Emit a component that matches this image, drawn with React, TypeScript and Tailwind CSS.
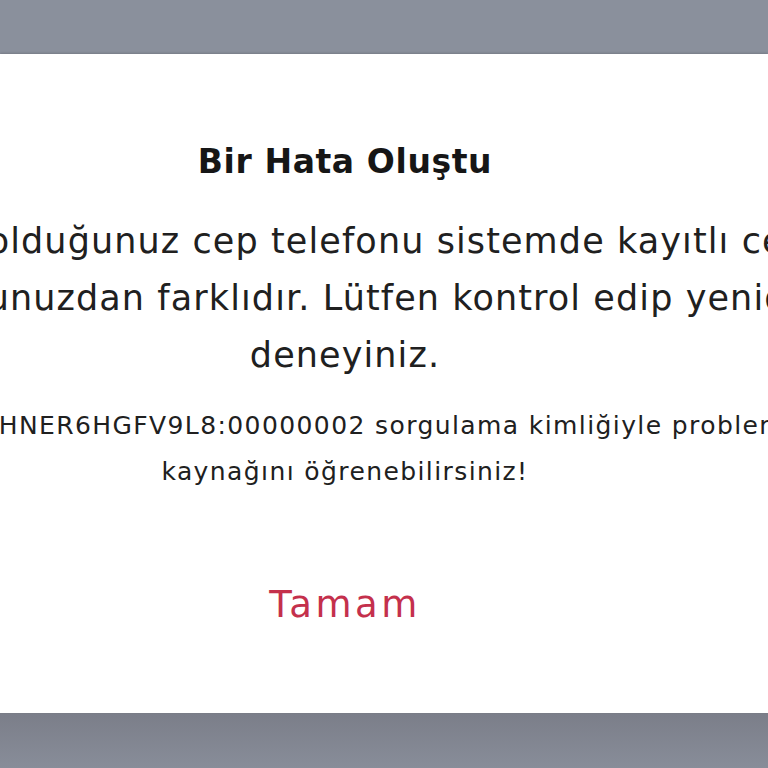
export default function App() {
  return (
    <div className="h-[768px] w-[768px] overflow-hidden bg-[#8a909c] font-['DejaVu_Sans',sans-serif]">
      <div className="h-[54px] bg-[#8a909c]" />
      <div className="relative h-[659px] bg-white shadow-[0_-1px_2px_rgba(0,0,0,0.15)]">
        <div className="ml-[-255px] flex w-[1200px] flex-col items-center pt-[84px] text-center">
          <h2 className="text-[33px] font-semibold leading-[48px] tracking-[0.6px] text-[#161616]">Bir Hata Oluştu</h2>
          <p className="mt-[27px] text-[35px] leading-[57px] tracking-[1.1px] text-[#202020]">
            Kayıt olduğunuz cep telefonu sistemde kayıtlı cep
            <br />
            telefonunuzdan farklıdır. Lütfen kontrol edip yeniden
            <br />
            deneyiniz.
          </p>
          <p className="mt-[19px] text-[25px] leading-[46px] tracking-[1.4px] text-[#202020]">
            Bizden 0HNER6HGFV9L8:00000002 sorgulama kimliğiyle problemin
            <br />
            kaynağını öğrenebilirsiniz!
          </p>
          <button className="mt-[85px] text-[37px] font-medium leading-[50px] tracking-[3.5px] text-[#c4304c]">Tamam</button>
        </div>
      </div>
      <div className="h-[55px] bg-gradient-to-b from-[#7b7e89] to-[#888d99]" />
    </div>
  );
}
